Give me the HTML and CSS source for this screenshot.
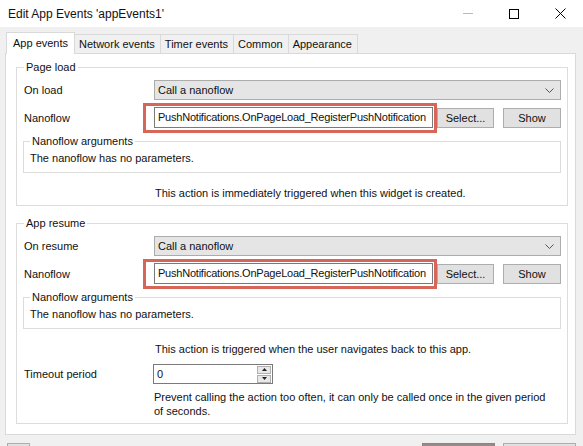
FILE: index.html
```html
<!DOCTYPE html>
<html>
<head>
<meta charset="utf-8">
<link rel="stylesheet" href="styles.css">
</head>
<body>
<div class="titlebar">
  <div class="title">Edit App Events 'appEvents1'</div>
  <div class="controls">
    <div class="ctl"><span class="min-line"></span></div>
    <div class="ctl"><span class="max-box"></span></div>
    <div class="ctl">
      <svg width="11" height="11" viewBox="0 0 11 11"><path d="M0.5 0.5 L10.5 10.5 M10.5 0.5 L0.5 10.5" stroke="#000" stroke-width="1" fill="none"/></svg>
    </div>
  </div>
</div>

<div class="tabs">
  <div class="tab active">App events</div>
  <div class="tab">Network events</div>
  <div class="tab">Timer events</div>
  <div class="tab">Common</div>
  <div class="tab">Appearance</div>
</div>

<div class="panel">
  <fieldset class="group">
    <legend>Page load</legend>
    <div class="row">
      <span class="label">On load</span>
      <div class="select"><span>Call a nanoflow</span><svg class="chev" width="9" height="5" viewBox="0 0 9 5"><path d="M0.5 0.5 L4.5 4.5 L8.5 0.5" stroke="#555" fill="none"/></svg></div>
    </div>
    <div class="row nano">
      <span class="label">Nanoflow</span>
      <div class="nano-ctrls">
        <div class="input-wrap"><div class="input">PushNotifications.OnPageLoad_RegisterPushNotification</div><span class="highlight"></span></div>
        <div class="btn sel">Select...</div>
        <div class="btn show">Show</div>
      </div>
    </div>
    <fieldset class="args">
      <legend>Nanoflow arguments</legend>
      <div>The nanoflow has no parameters.</div>
    </fieldset>
    <div class="note">This action is immediately triggered when this widget is created.</div>
  </fieldset>

  <fieldset class="group g2">
    <legend>App resume</legend>
    <div class="row">
      <span class="label">On resume</span>
      <div class="select"><span>Call a nanoflow</span><svg class="chev" width="9" height="5" viewBox="0 0 9 5"><path d="M0.5 0.5 L4.5 4.5 L8.5 0.5" stroke="#555" fill="none"/></svg></div>
    </div>
    <div class="row nano">
      <span class="label">Nanoflow</span>
      <div class="nano-ctrls">
        <div class="input-wrap"><div class="input">PushNotifications.OnPageLoad_RegisterPushNotification</div><span class="highlight"></span></div>
        <div class="btn sel">Select...</div>
        <div class="btn show">Show</div>
      </div>
    </div>
    <fieldset class="args">
      <legend>Nanoflow arguments</legend>
      <div>The nanoflow has no parameters.</div>
    </fieldset>
    <div class="note">This action is triggered when the user navigates back to this app.</div>
    <div class="row timeout">
      <span class="label">Timeout period</span>
      <div class="spinner">
        <span class="spin-val">0</span>
        <span class="spin-btns">
          <span class="spin-b"><svg width="5" height="3" viewBox="0 0 5 3"><path d="M0 3 L2.5 0 L5 3 Z" fill="#222"/></svg></span>
          <span class="spin-b"><svg width="5" height="3" viewBox="0 0 5 3"><path d="M0 0 L2.5 3 L5 0 Z" fill="#222"/></svg></span>
        </span>
      </div>
    </div>
    <div class="help">Prevent calling the action too often, it can only be called once in the given period of seconds.</div>
  </fieldset>
</div>

<div class="footer">
  <div class="fbtn left"></div>
  <div class="spacer"></div>
  <div class="fbtn ok"></div>
  <div class="fbtn cancel"></div>
</div>
</body>
</html>
```

FILE: styles.css
```css
* { box-sizing: border-box; }
html, body { margin: 0; padding: 0; }
body {
  width: 583px;
  height: 446px;
  overflow: hidden;
  background: #f0f0f0;
  font-family: "Liberation Sans", Arial, sans-serif;
  font-size: 11px;
  line-height: 14px;
  color: #111;
}

/* title bar */
.titlebar {
  height: 27px;
  background: #fff;
  display: flex;
  align-items: center;
}
.title {
  flex: 1;
  padding-left: 8px;
  font-size: 12px;
}
.controls { display: flex; height: 27px; }
.ctl {
  width: 46px;
  display: flex;
  align-items: center;
  justify-content: center;
}
.min-line { width: 10px; height: 1px; background: #bbb; }
.max-box { width: 10px; height: 10px; border: 1px solid #000; }

/* tabs */
.tabs {
  display: flex;
  align-items: flex-end;
  height: 26px;
  padding-left: 6px;
}
.tab {
  position: relative;
  height: 19px;
  padding: 2px 5px 0 4px;
  border: 1px solid #d9d9d9;
  border-bottom: none;
  background: #f0f0f0;
  margin-left: -1px;
  white-space: nowrap;
}
.tab:first-child { margin-left: 0; }
.tab.active {
  height: 22px;
  margin-bottom: -1px;
  background: #fff;
  z-index: 2;
  padding: 3px 6px 0 6px;
}

/* panel */
.panel {
  margin: 0 7px 0 5px;
  height: 382px;
  background: #fff;
  border: 1px solid #d9d9d9;
  padding: 6px 7px 0 10px;
}

fieldset { margin: 0; min-width: 0; }
legend { padding: 0 2px; line-height: 14px; }

.group {
  border: 1px solid #dcdcdc;
  padding: 6px 6px 5px 7px;
}
.g2 { margin-top: 10px; }

.row {
  display: grid;
  grid-template-columns: 130px 1fr;
  align-items: center;
}
.select {
  height: 20px;
  background: #e5e5e5;
  border: 1px solid #acacac;
  display: flex;
  align-items: center;
  justify-content: space-between;
  padding: 0 6px 0 3px;
}
.nano { margin-top: 7px; }
.nano-ctrls { display: flex; align-items: center; }
.input-wrap { position: relative; width: 279px; }
.input {
  height: 21px;
  border: 1px solid #7a7a7a;
  background: #fff;
  padding: 2px 0 0 3px;
  white-space: nowrap;
  overflow: hidden;
  letter-spacing: -0.22px;
}
.highlight {
  position: absolute;
  left: -11px;
  top: -4px;
  right: -4px;
  bottom: -5px;
  border: 3px solid #d6665a;
  pointer-events: none;
}
.btn {
  height: 20px;
  background: #e1e1e1;
  border: 1px solid #adadad;
  text-align: center;
  padding-top: 2px;
}
.sel { width: 57px; margin-left: 4px; }
.show { width: 58px; margin-left: 9px; }

.args {
  margin: 6px 0 0 -1px;
  border: 1px solid #dcdcdc;
  padding: 3px 6px 7px 6px;
}
.note {
  margin: 13px 0 0 131px;
}
.timeout { margin-top: 8px; }
.spinner {
  width: 120px;
  height: 20px;
  border: 1px solid #7a7a7a;
  display: flex;
  justify-content: space-between;
  align-items: center;
  padding-left: 3px;
  margin-left: -1px;
}
.spin-btns {
  display: flex;
  flex-direction: column;
  gap: 1px;
  padding-right: 1px;
}
.spin-b {
  width: 14px;
  height: 8px;
  background: #e8e8e8;
  border: 1px solid #b0b0b0;
  display: flex;
  align-items: center;
  justify-content: center;
}
.help {
  margin: 6px 0 0 130px;
  padding-right: 8px;
}

/* footer */
.footer {
  display: flex;
  padding: 8px 7px 0 7px;
}
.fbtn { height: 23px; border: 1px solid #adadad; background: #e1e1e1; }
.left { width: 23px; }
.spacer { flex: 1; }
.ok { width: 73px; border-color: #8f8282; background: #968a8a; }
.cancel { width: 73px; margin-left: 8px; }
```
